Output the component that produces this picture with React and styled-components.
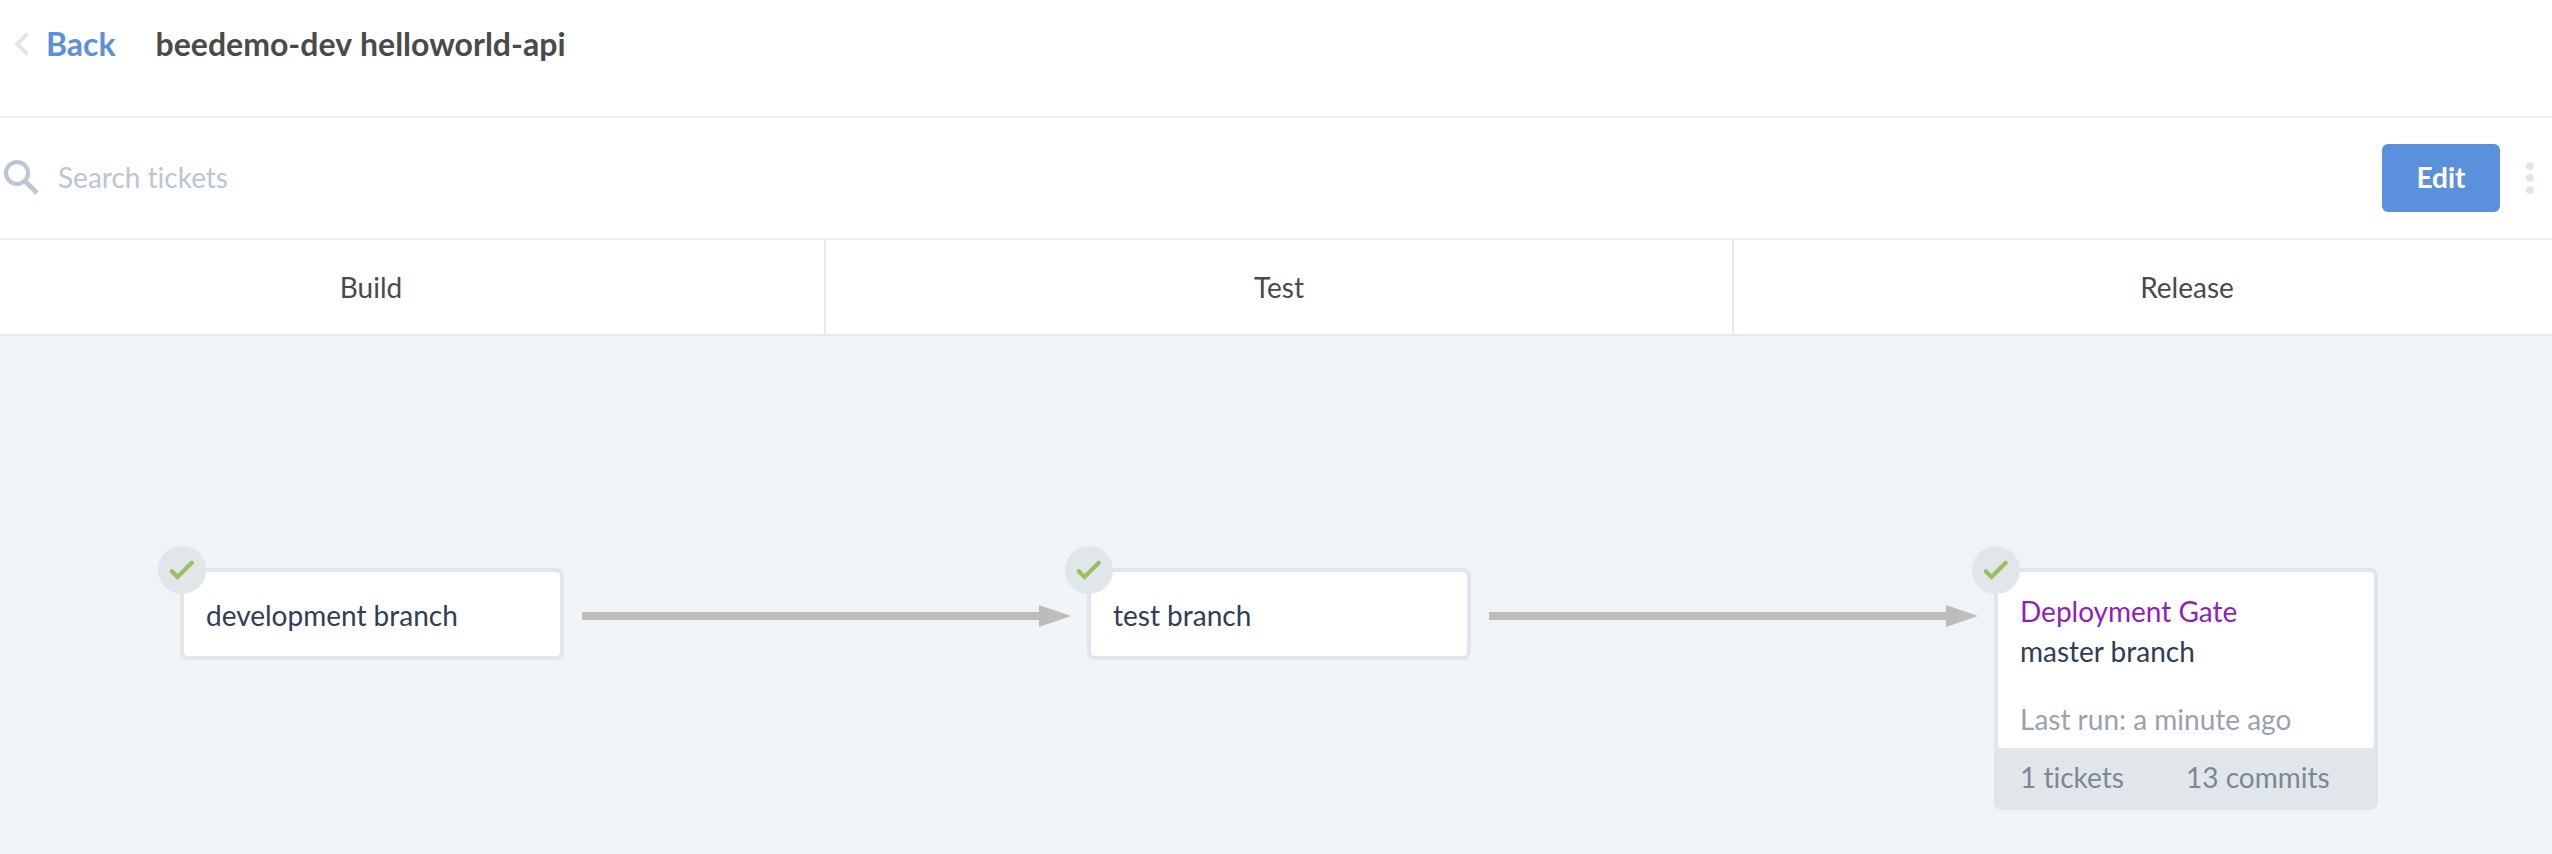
import React from "react";
import styled, { createGlobalStyle } from "styled-components";

const Global = createGlobalStyle`
  * { box-sizing: border-box; }
  html, body { margin: 0; background: #f0f4f7; }
  body {
    font-family: Lato, sans-serif;
    font-size: 28px;
    font-variant-ligatures: none;
    overflow: hidden;
  }
`;

const Page = styled.div`
  width: 100%;
  height: 854px;
  overflow: hidden;
  display: flex;
  flex-direction: column;
`;

const Header = styled.header`
  height: 118px;
  flex: none;
  display: flex;
  align-items: flex-start;
  padding: 24px 0 0 13px;
  background: #fff;
  border-bottom: 2px solid #efefef;
  font-size: 32px;
  font-weight: 700;
  line-height: 40px;
`;

const Chevron = styled.svg`
  width: 18px;
  height: 28px;
  margin: 6px 15px 0 0;
  flex: none;
`;

const BackLink = styled.a`
  color: #5b90dc;
  margin-right: 40px;
`;

const Title = styled.h1`
  margin: 0;
  font: inherit;
  word-spacing: 1px;
  color: #4a4a4a;
`;

const Toolbar = styled.div`
  height: 122px;
  flex: none;
  display: flex;
  align-items: center;
  padding: 0 18px 0 2px;
  background: #fff;
  border-bottom: 2px solid #efefef;
`;

const SearchIcon = styled.svg`
  width: 38px;
  height: 38px;
  margin: 0 18px 2px 0;
`;

const SearchInput = styled.input`
  flex: 1;
  min-width: 0;
  height: 40px;
  padding: 0 0 2px;
  border: 0;
  outline: 0;
  background: none;
  font: inherit;
  font-variant-ligatures: none;
  &::placeholder { color: #bcc5d5; opacity: 1; }
`;

const EditButton = styled.button`
  width: 118px;
  height: 68px;
  padding: 0 0 2px;
  border: 0;
  border-radius: 6px;
  background: #5b90dc;
  color: #fff;
  font: inherit;
  font-weight: 700;
`;

const MoreButton = styled.div`
  display: flex;
  flex-direction: column;
  gap: 4px;
  margin-left: 26px;
`;

const Dot = styled.i`
  width: 8px;
  height: 8px;
  border-radius: 50%;
  background: #e1e6ea;
`;

const Stages = styled.div`
  height: 96px;
  flex: none;
  display: grid;
  grid-template-columns: 826px 908px 908px;
  background: #fff;
  border-bottom: 2px solid #e6e9ec;
`;

const Stage = styled.div`
  display: flex;
  align-items: center;
  justify-content: center;
  padding-right: ${(p) => (p.$first ? "82px" : "0")};
  border-right: 2px solid #e6e9ec;
  color: #4a4a4a;
`;

const Board = styled.main`
  flex: 1;
  display: flex;
  align-items: flex-start;
  padding: 232px 0 0 180px;
  background: #f0f4f7;
`;

const Card = styled.article`
  position: relative;
  flex: none;
  width: 384px;
  border: 4px solid #e1e6ea;
  border-radius: 8px;
  background: #e1e6ea;
  color: #2e4057;
`;

const CardBody = styled.div`
  padding: ${(p) => (p.$detailed ? "19px 22px 0" : "23px 22px 0")};
  height: ${(p) => (p.$detailed ? "176px" : "84px")};
  border-radius: 4px;
  background: #fff;
  line-height: 40px;
`;

const Gate = styled.div`
  color: #901fbd;
`;

const LastRun = styled.div`
  margin-top: 28px;
  color: #98a2b1;
`;

const CardFooter = styled.footer`
  height: 58px;
  display: flex;
  padding: 9px 22px 0;
  line-height: 40px;
  color: #7c8795;
`;

const Count = styled.span`
  width: 167px;
  white-space: nowrap;
`;

const Badge = styled.svg`
  position: absolute;
  left: -26px;
  top: -26px;
  width: 48px;
  height: 48px;
`;

const Arrow = styled.svg`
  flex: none;
  width: 489px;
  height: 22px;
  margin: 37px 16px 0 18px;
`;

function StatusBadge() {
  return (
    <Badge viewBox="0 0 48 48">
      <circle cx="24" cy="24" r="24" fill="#e1e6ea" />
      <path d="M13.8 25.3 L19.5 31 L33.7 16.8" fill="none" stroke="#98c160" strokeWidth="4.4" strokeLinecap="round" />
    </Badge>
  );
}

function Connector() {
  return (
    <Arrow viewBox="0 0 489 22">
      <path d="M0 7 H457 V0 L489 11 L457 22 V15 H0 Z" fill="#bcbcbc" />
    </Arrow>
  );
}

function BranchCard({ name }) {
  return (
    <Card>
      <CardBody>{name}</CardBody>
      <StatusBadge />
    </Card>
  );
}

export default function App() {
  return (
    <Page>
      <Global />
      <Header>
        <Chevron viewBox="0 0 18 28">
          <path d="M14.5 3.5 L4 14 L14.5 24.5" fill="none" stroke="#e1e6ea" strokeWidth="4" />
        </Chevron>
        <BackLink>Back</BackLink>
        <Title>beedemo-dev helloworld-api</Title>
      </Header>
      <Toolbar>
        <SearchIcon viewBox="0 0 38 38">
          <circle cx="15" cy="15" r="11" fill="none" stroke="#bcc5d5" strokeWidth="4" />
          <path d="M23.5 23.5 L35 35" stroke="#bcc5d5" strokeWidth="4.6" />
        </SearchIcon>
        <SearchInput placeholder="Search tickets" />
        <EditButton>Edit</EditButton>
        <MoreButton>
          <Dot />
          <Dot />
          <Dot />
        </MoreButton>
      </Toolbar>
      <Stages>
        <Stage $first>Build</Stage>
        <Stage>Test</Stage>
        <Stage>Release</Stage>
      </Stages>
      <Board>
        <BranchCard name="development branch" />
        <Connector />
        <BranchCard name="test branch" />
        <Connector />
        <Card>
          <CardBody $detailed>
            <Gate>Deployment Gate</Gate>
            <div>master branch</div>
            <LastRun>Last run: a minute ago</LastRun>
          </CardBody>
          <CardFooter>
            <Count>1 tickets</Count>
            <Count>13 commits</Count>
          </CardFooter>
          <StatusBadge />
        </Card>
      </Board>
    </Page>
  );
}
